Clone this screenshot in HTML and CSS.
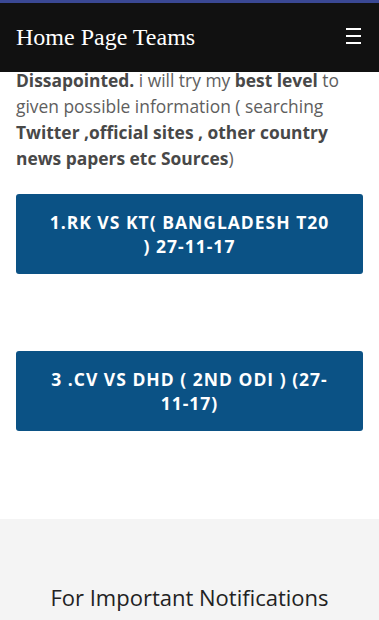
FILE: index.html
```html
<!DOCTYPE html>
<html lang="en">
<head>
    <meta charset="UTF-8">
    <meta name="viewport" content="width=device-width, initial-scale=1.0">
    <title>Home Page Teams</title>
    <link rel="stylesheet" href="styles.css">
</head>
<body>
    <header class="site-header">
        <div class="header-bar">
            <span class="site-title">Home Page Teams</span>
            <button class="menu-toggle" aria-label="Menu">
                <span></span><span></span><span></span>
            </button>
        </div>
    </header>

    <main class="content">
        <p class="intro">
            <strong>Dissapointed.</strong> i will try my <strong>best level</strong> to given possible information ( searching <strong>Twitter ,official sites , other country news papers etc Sources</strong>)
        </p>

        <a class="match-btn" href="#">1.RK VS KT( BANGLADESH T20 ) 27-11-17</a>
        <div class="match-gap"></div>
        <a class="match-btn" href="#">3 .CV VS DHD ( 2ND ODI ) (27-11-17)</a>
    </main>

    <section class="notify">
        <h2 class="notify-title">For Important Notifications</h2>
    </section>
</body>
</html>
```

FILE: styles.css
```css
body {
    margin: 0;
    font-family: 'Open Sans', 'Noto Sans', sans-serif;
    background: #ffffff;
    color: #5e5e5e;
}

.site-header {
    position: fixed;
    top: 0;
    left: 0;
    right: 0;
    z-index: 10;
    border-top: 3px solid #3a4894;
    background: #111111;
}

.header-bar {
    height: 69px;
    display: flex;
    align-items: center;
    justify-content: space-between;
    padding: 0 16px;
}

.site-title {
    font-family: 'Liberation Serif', 'DejaVu Serif', serif;
    font-size: 24px;
    color: #ffffff;
}

.menu-toggle {
    background: none;
    border: none;
    padding: 0;
    width: 15px;
    height: 16px;
    display: flex;
    flex-direction: column;
    justify-content: space-between;
    margin-right: 2px;
    margin-bottom: 3px;
    cursor: pointer;
}

.menu-toggle span {
    display: block;
    height: 2px;
    background: #ffffff;
}

.content {
    padding: 67px 16px 88px;
}

.intro {
    margin: 0 0 23px;
    font-size: 17.4px;
    line-height: 26px;
}

.intro strong {
    font-weight: 700;
    color: #484848;
}

.match-btn {
    display: block;
    background: #0b5285;
    color: #ffffff;
    text-decoration: none;
    text-align: center;
    text-transform: uppercase;
    font-weight: 700;
    font-size: 17.5px;
    line-height: 24px;
    letter-spacing: 1px;
    padding: 16px 30px;
    border-radius: 3px;
}

.match-gap {
    height: 77px;
}

.notify {
    background: #f4f4f4;
    padding: 63px 16px 40px;
}

.notify-title {
    margin: 0;
    text-align: center;
    font-weight: 400;
    font-size: 22px;
    color: #222222;
}
```
